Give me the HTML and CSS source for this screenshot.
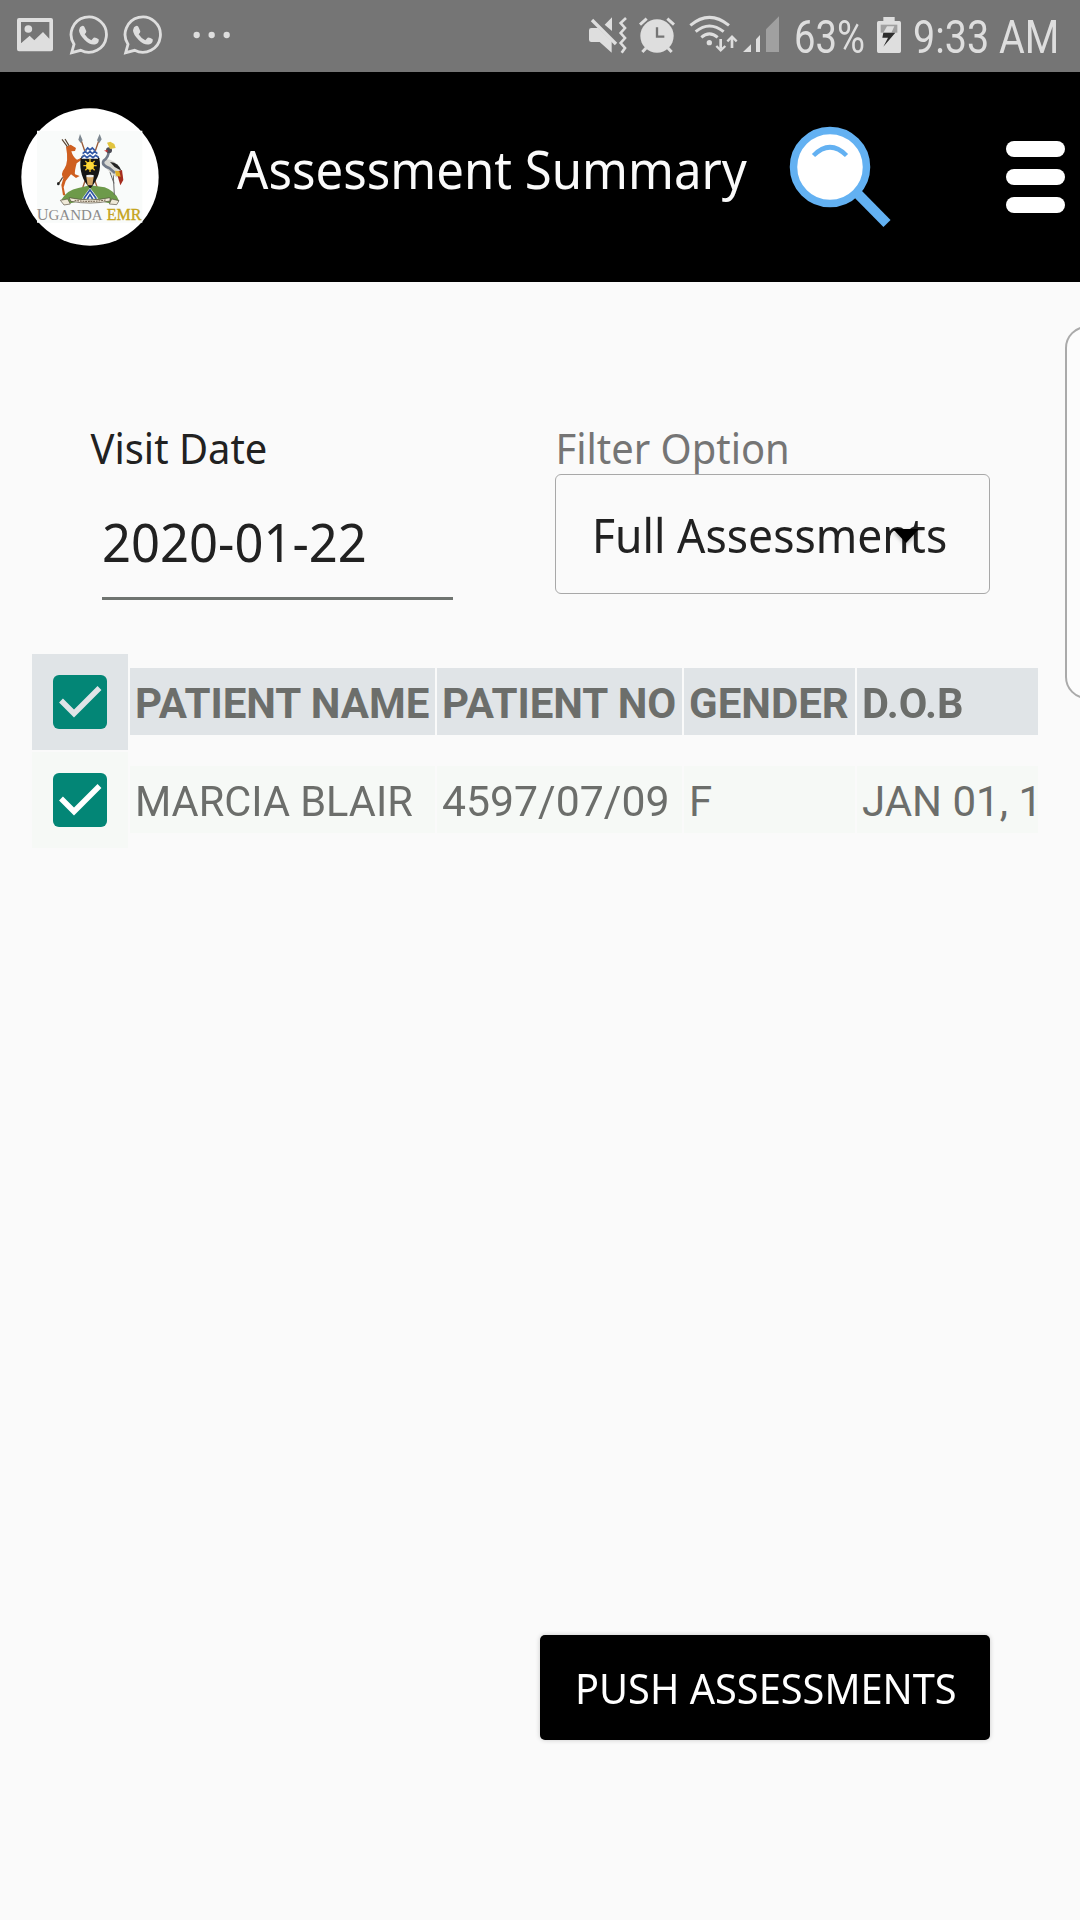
FILE: index.html
```html
<!DOCTYPE html>
<html lang="en">
<head>
<meta charset="utf-8">
<title>Assessment Summary</title>
<link rel="stylesheet" href="styles.css">
</head>
<body>
<div class="status">
  <div class="status-group">
    <svg width="36" height="72" viewBox="51 0 108 216"><path fill="#dedede" fill-rule="evenodd" d="M57 54H153Q159 54 159 60V148Q159 154 153 154H57Q51 154 51 148V60Q51 54 57 54ZM63 66V130L89 107L103 121L129 96L148 116V66Z"/><circle cx="85" cy="87" r="11.5" fill="#dedede"/></svg>
    <svg class="chat" width="40" height="72" viewBox="207 0 120 216"><use href="#chat"/></svg>
    <svg class="chat" width="40" height="72" viewBox="207 0 120 216">
      <g id="chat"><path fill="none" stroke="#dedede" stroke-width="8.5" d="M222 133A53 53 0 1 1 242 151L215 158Z"/><path fill="#dedede" d="M240 82Q248 74 253 80L259 94Q259 99 254 103Q262 116 274 121L281 113Q288 112 296 118Q298 129 287 133Q271 137 254 120Q237 103 237 91Z"/></g>
    </svg>
    <svg class="dots" width="38" height="72" viewBox="579 0 114 216" fill="#dedede"><circle cx="590" cy="105" r="9.5"/><circle cx="635" cy="105" r="9.5"/><circle cx="680" cy="105" r="9.5"/></svg>
  </div>
  <div class="status-group">
    <svg width="40" height="72" viewBox="54 0 120 216"><path fill="#dedede" d="M64 84H84L125 124V158L89 126H64Q57 126 57 119V91Q57 84 64 84ZM126 52V93L104 74Z"/><path stroke="#757575" stroke-width="5" d="M73 53L146 126"/><path stroke="#dedede" stroke-width="10" d="M66 60L138 132"/><path fill="none" stroke="#dedede" stroke-width="8" d="M168 54L152 69L165 84L152 99L165 114L152 129L165 144L155 158"/></svg>
    <svg class="alarm" width="38" height="72" viewBox="204 0 114 216"><circle cx="261" cy="108" r="50" fill="#dedede"/><path stroke="#dedede" stroke-width="9" d="M210 74L230 56M292 56L312 74M229 143L217 156M293 143L305 156"/><path fill="none" stroke="#757575" stroke-width="7" d="M261 82V110H283"/></svg>
    <svg class="wifi" width="50" height="72" viewBox="354 0 150 216"><g fill="none" stroke="#dedede" stroke-width="9"><path d="M361 76Q418 28 477 76M377 95Q418 61 461 95M394 112Q418 91 443 112"/></g><circle cx="418" cy="128" r="8" fill="#dedede"/><path stroke="#dedede" stroke-width="8" d="M452 117V146M486 144V114"/><path fill="none" stroke="#dedede" stroke-width="7" d="M439 138L452 151L466 138M472 124L486 110L500 124"/></svg>
    <svg class="signal" width="38" height="72" viewBox="516 0 114 216"><path fill="#dedede" d="M519 156L543 133V156ZM558 118L570 105V156H558Z"/><path fill="#a0a0a0" d="M588 88L627 49V156H588Z"/></svg>
    <div class="slot percent"><span class="fit">63%</span></div>
    <svg class="battery" width="26" height="72" viewBox="168 0 78 216"><path fill="#dedede" d="M190 51H224V63H238Q243 63 243 68V154Q243 159 238 159H176Q171 159 171 154V68Q171 63 176 63H190Z"/><path fill="#a0a0a0" d="M182 74H232V98H182Z"/><path fill="#dedede" d="M201 79H223L214 98H190Z"/><path fill="#2d2d2d" d="M190 98H226L190 140L204 113H187Z"/></svg>
    <div class="slot time"><span class="fit">9:33 AM</span></div>
  </div>
</div>

<header class="appbar">
  <svg class="logo" viewBox="63 54 414 414">
    <circle cx="270" cy="261" r="206" fill="#fff"/>
    <path fill="#f9fbfa" d="M111 122H427V398H111Z"/>
    <path stroke="#9a5b38" stroke-width="4" d="M243 150L296 305M297 150L244 305"/>
    <path fill="#7d8790" d="M240 132L248 151L242 159L235 149ZM299 132L305 148L298 159L291 151Z"/>
    <path fill="#6d9a4a" d="M184 329Q201 300 235 294L270 286L314 292Q346 303 357 332L338 342L270 326L202 342Z"/>
    <path fill="#cf5f20" d="M198 170L212 164L228 174L225 183L214 184Q219 202 231 209L243 204V211L230 220Q223 245 225 253L239 258L228 264L213 253L197 273L191 292L196 316H189L184 285L190 265Q181 250 193 236Q207 216 198 170Z"/>
    <path fill="none" stroke="#594533" stroke-width="3.5" d="M202 170L186 148M207 167L195 147M176 281L188 262"/>
    <ellipse cx="175" cy="281" rx="4" ry="5" fill="#222"/>
    <path fill="#d9d9d4" d="M313 207Q348 206 366 244L350 263Q326 246 313 227Z"/>
    <path fill="none" stroke="#727b8a" stroke-width="8" d="M326 183Q326 202 311 212Q303 226 329 235L345 249"/>
    <path fill="#222" d="M330 216Q356 218 364 242L344 231Z"/><path fill="#a52c1e" d="M349 245L366 240L370 270L361 286Z"/><path fill="#dfae26" d="M345 242L358 244L362 260L348 257Z"/>
    <path fill="none" stroke="#666" stroke-width="3" d="M340 256L343 315M330 247L342 280"/>
    <circle cx="327" cy="181" r="9" fill="#4c4c55"/><path fill="#e2c43e" d="M321 158L331 155L343 162L347 174L330 177Z"/><path fill="#c33" d="M312 182L322 179L323 187Z"/>
    <path fill="#151515" d="M242 205Q270 153 298 205Q308 252 271 296Q235 260 242 205Z"/>
    <path fill="#fff" d="M247 198Q270 142 294 198L294 206H245Z"/><path fill="none" stroke="#3157a4" stroke-width="5" d="M257 181L263 174L270 180L277 174L284 181M248 191L256 184L263 191L270 184L277 191L284 184L292 191M245 203L253 196L261 203L270 196L279 203L287 196L296 203"/>
    <path stroke="#efbd20" stroke-width="4" d="M270 207V246M250 227H290M256 213L284 241M256 241L284 213"/><circle cx="270" cy="227" r="12" fill="#ffda3a"/>
    <path fill="#d3a767" d="M259 261H281L277 286H263Z"/><ellipse cx="270" cy="258" rx="12" ry="4" fill="#eee"/>
    <path fill="#fff" d="M246 326L270 293L295 326Z"/><path fill="none" stroke="#3157a4" stroke-width="5" d="M251 326L270 300L289 326M262 327L270 314L278 327"/>
    <path fill="#f0ead8" stroke="#554d3f" stroke-width="2" d="M181 331L203 327L211 342L192 345ZM335 327L357 332L350 344L328 342ZM207 323Q270 336 330 323V333Q270 345 213 334Z"/>
    <path stroke="#594533" stroke-width="3" stroke-dasharray="5 3" d="M224 331Q270 338 317 330" fill="none"/>
    <text class="logo-gray" x="110" y="390" textLength="198" lengthAdjust="spacingAndGlyphs"><tspan font-size="47">U</tspan><tspan font-size="43">GANDA</tspan></text>
    <text class="logo-gold" x="320" y="390" textLength="104" lengthAdjust="spacingAndGlyphs">EMR</text>
  </svg>
  <h1 class="slot title"><span class="fit">Assessment Summary</span></h1>
  <svg class="search" width="102" height="102" viewBox="789 126 102 102"><path stroke="#63b1f2" stroke-width="10" d="M854 190L887 223.5"/><circle cx="830" cy="167" r="36.5" fill="#fff" stroke="#63b1f2" stroke-width="7.5"/><path fill="none" stroke="#63b1f2" stroke-width="4.5" d="M813.5 155.5Q830 139 846.500 155.500"/></svg>
  <div class="menu"><i></i><i></i><i></i></div>
</header>

<main>
  <section class="filters">
    <div class="date-field">
      <div class="slot label dark"><span class="fit">Visit Date</span></div>
      <div class="date-input"><span class="fit">2020-01-22</span></div>
    </div>
    <div class="option-field">
      <div class="slot label"><span class="fit">Filter Option</span></div>
      <div class="select"><span class="fit">Full Assessments</span><svg class="caret" width="28" height="20" viewBox="0 0 28 20"><path d="M1 3H27L14 17Z"/></svg></div>
    </div>
  </section>

  <section class="table">
    <div class="row head">
      <div class="check"><svg width="54" height="54" viewBox="0 0 54 54"><rect width="54" height="54" rx="6"/><path d="M8 25.500L21 38.500L46.500 13"/></svg></div>
      <div class="cell name"><span class="fit">PATIENT NAME</span></div>
      <div class="cell number"><span class="fit">PATIENT NO</span></div>
      <div class="cell gender"><span class="fit">GENDER</span></div>
      <div class="cell birth"><span class="fit narrow">D.O.B</span></div>
    </div>
    <div class="row">
      <div class="check"><svg width="54" height="54" viewBox="0 0 54 54"><rect width="54" height="54" rx="6"/><path d="M8 25.500L21 38.500L46.500 13"/></svg></div>
      <div class="cell name"><span class="fit narrow">MARCIA BLAIR</span></div>
      <div class="cell number"><span class="fit wide">4597/07/09</span></div>
      <div class="cell gender"><span class="fit">F</span></div>
      <div class="cell birth"><span class="fit">JAN 01, 1</span></div>
    </div>
  </section>

  <div class="actions"><button class="push"><span class="fit">PUSH ASSESSMENTS</span></button></div>
</main>
<aside class="edge-panel"></aside>
</body>
</html>
```
FILE: styles.css
```css
* { box-sizing: border-box; }
body { margin: 0; width: 1080px; height: 1920px; position: relative; overflow: hidden; display: flex; flex-direction: column; background: #fafafa; color: #212121; font-family: "Noto Sans", sans-serif; }
svg { display: block; flex: none; }
.fit { display: inline-block; white-space: nowrap; transform-origin: 0 50%; }
.slot { flex: none; white-space: nowrap; }

.status { height: 72px; padding: 0 23px 0 17px; display: flex; justify-content: space-between; background: #757575; color: #dedede; font: 45.5px/75px Roboto, sans-serif; }
.status-group { display: flex; height: 72px; }
.chat { margin-left: 16px; }
.chat + .chat { margin-left: 14px; }
.dots { margin-left: 30px; }
.alarm { margin-left: 10px; }
.wifi { margin-left: 12px; }
.signal { margin-left: 4px; }
.percent { width: 70px; margin-left: 14px; }
.percent .fit { transform: scaleX(.84); }
.battery { margin-left: 12px; }
.time { width: 144px; margin-left: 11px; }
.time .fit { transform: scaleX(.868); }

.appbar { height: 210px; padding: 0 15px 0 21px; display: flex; align-items: center; background: #000; color: #fafafa; }
.logo { width: 138px; height: 138px; }
.logo text { font-family: "Liberation Serif", serif; }
.logo-gray { fill: #8c8c8c; }
.logo-gold { fill: #c5a419; stroke: #c5a419; stroke-width: 1; font-size: 47px; }
.title { margin: 0 0 16px 78px; width: 508px; font-size: 53px; font-weight: 400; line-height: 70px; }
.title .fit { transform: scaleX(.927); }
.search { margin-left: 44px; }
.menu { margin-left: auto; display: grid; gap: 12px; }
.menu i { width: 59px; height: 16px; border-radius: 8px; background: #fff; }

.filters { padding: 145px 90px 0; display: flex; justify-content: space-between; }
.label { height: 47px; font-size: 42px; line-height: 42px; color: #757575; }
.label .fit { transform: translateX(.5px) scaleX(.95); }
.dark { color: #212121; }
.date-input { margin-left: 12px; width: 351px; height: 126px; border-bottom: 3px solid #6f7470; font-size: 53px; line-height: 135px; }
.date-input .fit { transform: scaleX(.957); }
.option-field { width: 435px; }
.select { position: relative; height: 120px; padding-left: 36px; border: 1px solid #a8a8a8; border-radius: 6px; font-size: 47.5px; line-height: 119px; }
.select .fit { transform: scaleX(.936); }
.caret { position: absolute; left: 336px; top: 51px; filter: drop-shadow(0 2px 2px rgba(0, 0, 0, .3)); }

.table { margin: 54px 42px 0 32px; display: grid; gap: 2px; color: #6c6e6b; font: 42px/72px Roboto, sans-serif; }
.row { display: grid; grid-template-columns: 96px 305px 245px 171px 181px; column-gap: 2px; align-items: start; }
.check { height: 96px; display: grid; place-items: center; background: #f6f9f6; }
.check rect { fill: #038676; }
.check path { fill: none; stroke: #fff; stroke-width: 5.5; }
.cell { height: 67px; margin-top: 14px; padding-left: 5px; overflow: hidden; background: #f6f9f6; }
.head { font-weight: 700; }
.head .check, .head .cell { background: #e0e4e7; }
.head .check path { stroke: #e0e4e7; }
.narrow { transform: scaleX(.988); }
.wide { transform: scaleX(1.018); }

.actions { margin: 787px 90px 0; display: flex; justify-content: flex-end; }
.push { width: 450px; height: 105px; padding: 0 0 0 35px; border: 0; border-radius: 5px; background: #000; color: #fff; font: 42px/106px "Noto Sans", sans-serif; text-align: left; box-shadow: 0 0 5px rgba(0, 0, 0, .2); }
.push .fit { transform: scaleX(.946); }

.edge-panel { position: absolute; left: 1065px; top: 326px; width: 60px; height: 373px; border: 2px solid #aaa; border-radius: 22px; background: #fcfcfc; }
```
